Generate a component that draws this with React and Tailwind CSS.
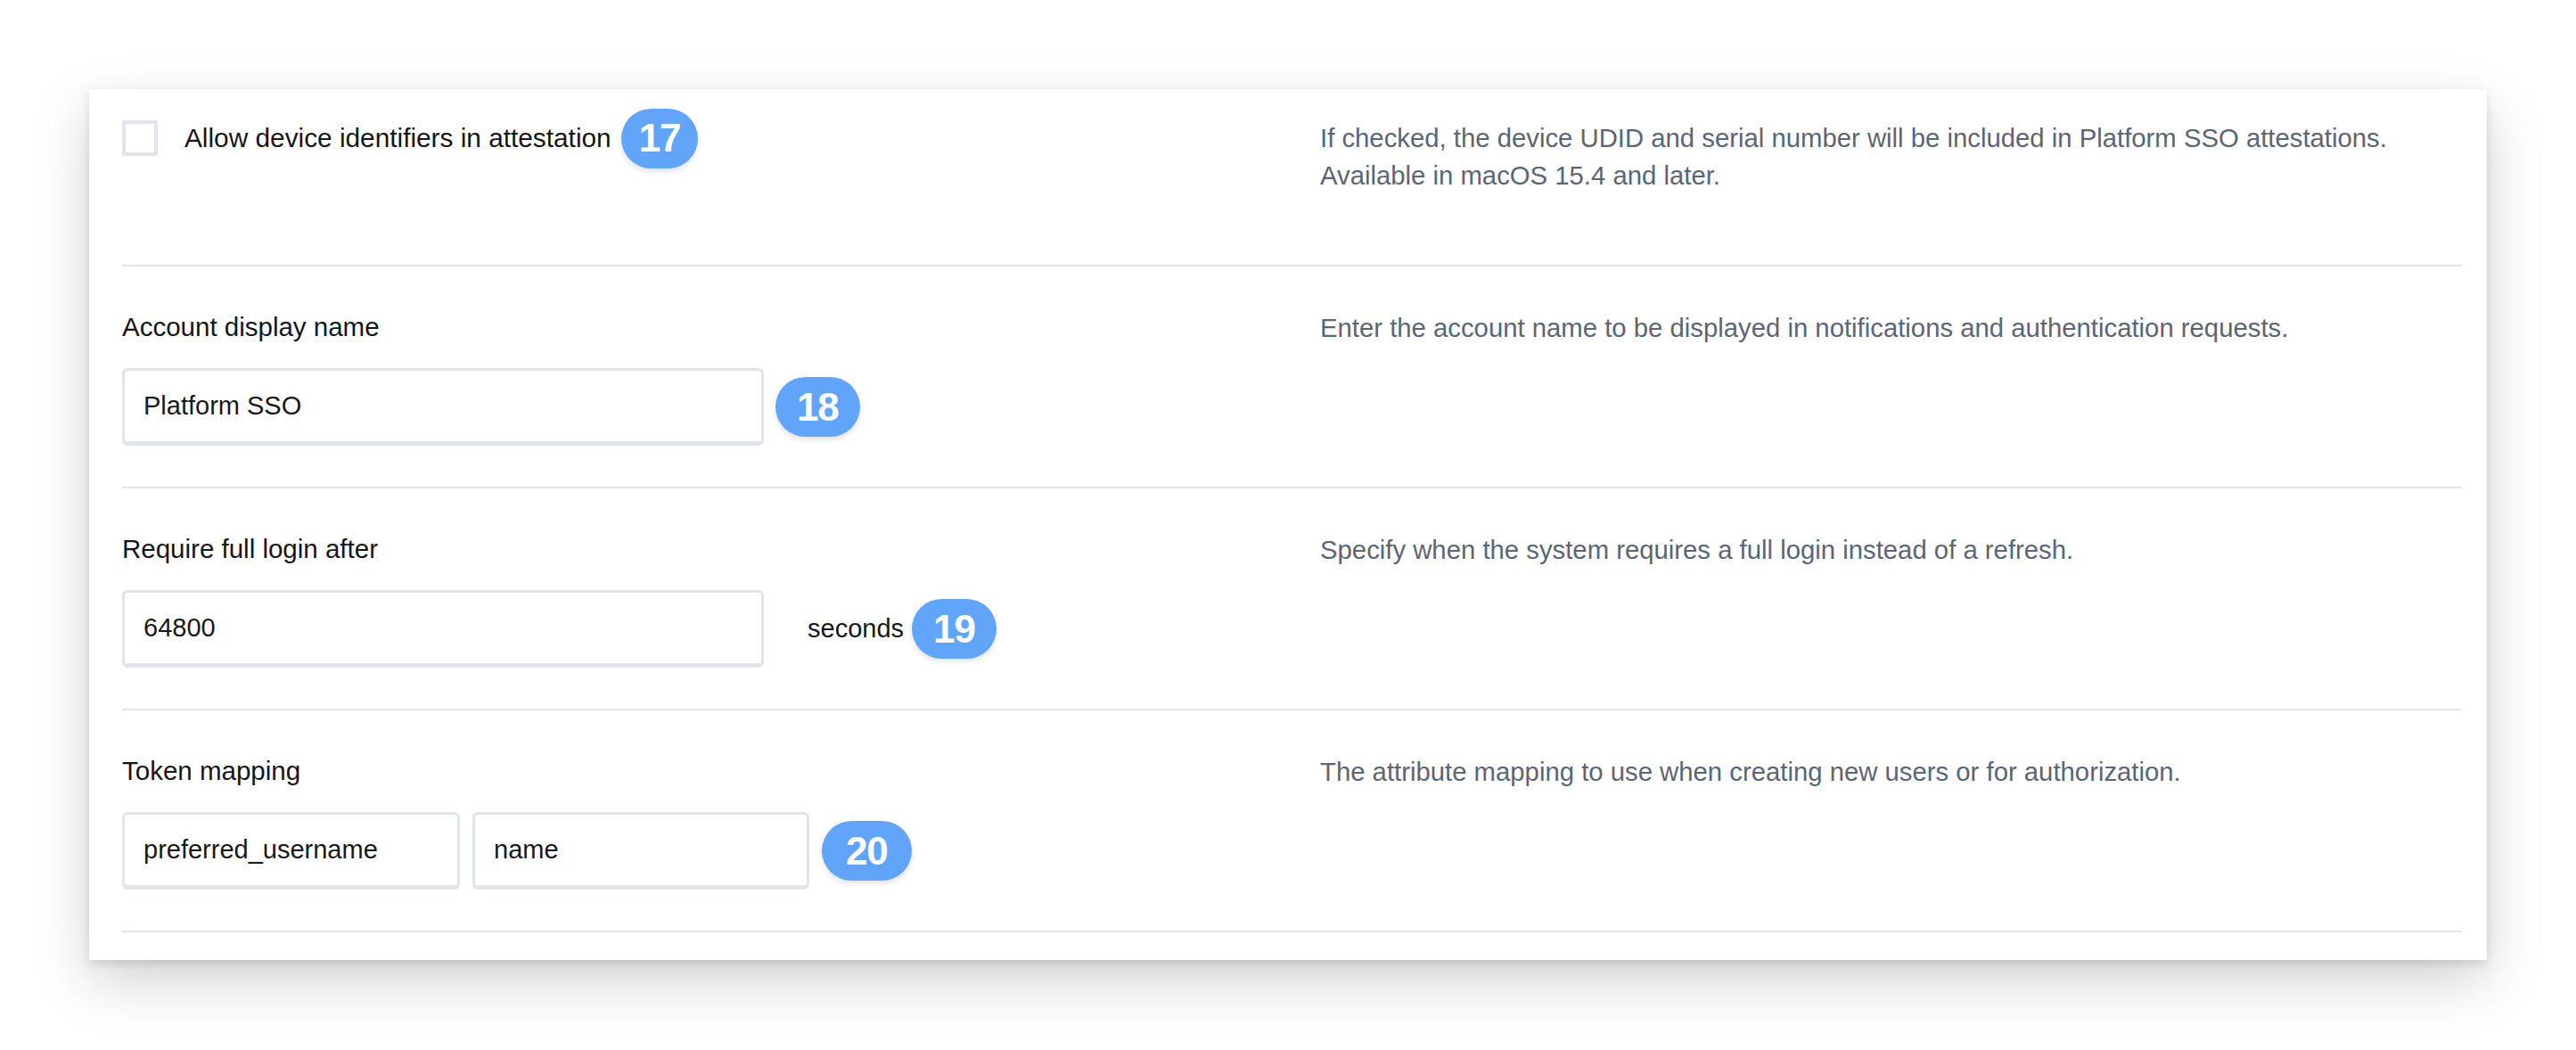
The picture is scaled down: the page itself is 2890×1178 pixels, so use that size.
import React from 'react';

const Badge = ({ n, px = 'px-[20px]' }) => (
  <span className={`inline-flex h-[67px] items-center justify-center rounded-full bg-[#61a5fa] ${px} text-[44px] font-bold leading-none tracking-tight text-white shadow-[0_3px_6px_rgba(0,0,0,0.12)]`}>
    {n}
  </span>
);

const Field = ({ value, width }) => (
  <input
    readOnly
    value={value}
    className={`h-[87px] ${width} rounded-md border-[3px] border-b-[5px] border-[#e1e4eb] bg-white px-[21px] text-[29px] text-[#181818] outline-none`}
  />
);

const Description = ({ children }) => (
  <p className="text-[29.3px] leading-[42px] text-[#5b6573]">{children}</p>
);

const Row = ({ label, children, description }) => (
  <div className="grid grid-cols-2 gap-16 border-b-2 border-[#e4e5eb] pt-[48px] pb-[46px]">
    <div>
      <label className="block text-[29.5px] leading-[40px] text-[#161616]">{label}</label>
      <div className="mt-[26px] flex items-center">{children}</div>
    </div>
    <Description>{description}</Description>
  </div>
);

const App = () => {
  return (
    <div className="min-h-screen bg-white pl-[100px] pt-[100px] font-['Liberation_Sans',Arial,sans-serif]">
      <div className="w-[2690px] bg-white pl-[37px] pr-[29px] pb-[31px] shadow-[0_4px_10px_rgba(0,0,0,0.12),0_24px_60px_rgba(0,0,0,0.18)]">
        {/* attestation checkbox */}
        <div className="grid h-[199px] grid-cols-2 gap-16 border-b-2 border-[#e4e5eb] pt-[34px]">
          <div className="flex h-[42px] items-center">
            <span className="h-[40px] w-[40px] shrink-0 rounded-[2px] border-4 border-[#e2e4ec] bg-white" />
            <span className="ml-[30px] mr-[11px] text-[29.8px] leading-[40px] text-[#161616]">
              Allow device identifiers in attestation
            </span>
            <Badge n="17" />
          </div>
          <Description>
            If checked, the device UDID and serial number will be included in Platform SSO attestations.
            <br />
            Available in macOS 15.4 and later.
          </Description>
        </div>

        <Row
          label="Account display name"
          description="Enter the account name to be displayed in notifications and authentication requests."
        >
          <Field value="Platform SSO" width="w-[720px]" />
          <span className="ml-[13px]">
            <Badge n="18" px="px-[24px]" />
          </span>
        </Row>

        <Row
          label="Require full login after"
          description="Specify when the system requires a full login instead of a refresh."
        >
          <Field value="64800" width="w-[720px]" />
          <span className="ml-[49px] mr-[9px] text-[29px] text-[#161616]">seconds</span>
          <Badge n="19" px="px-[24px]" />
        </Row>

        <Row
          label="Token mapping"
          description="The attribute mapping to use when creating new users or for authorization."
        >
          <Field value="preferred_username" width="w-[379px]" />
          <span className="ml-[14px]">
            <Field value="name" width="w-[378px]" />
          </span>
          <span className="ml-[14px]">
            <Badge n="20" px="px-[27px]" />
          </span>
        </Row>
      </div>
    </div>
  );
};

export default App;
